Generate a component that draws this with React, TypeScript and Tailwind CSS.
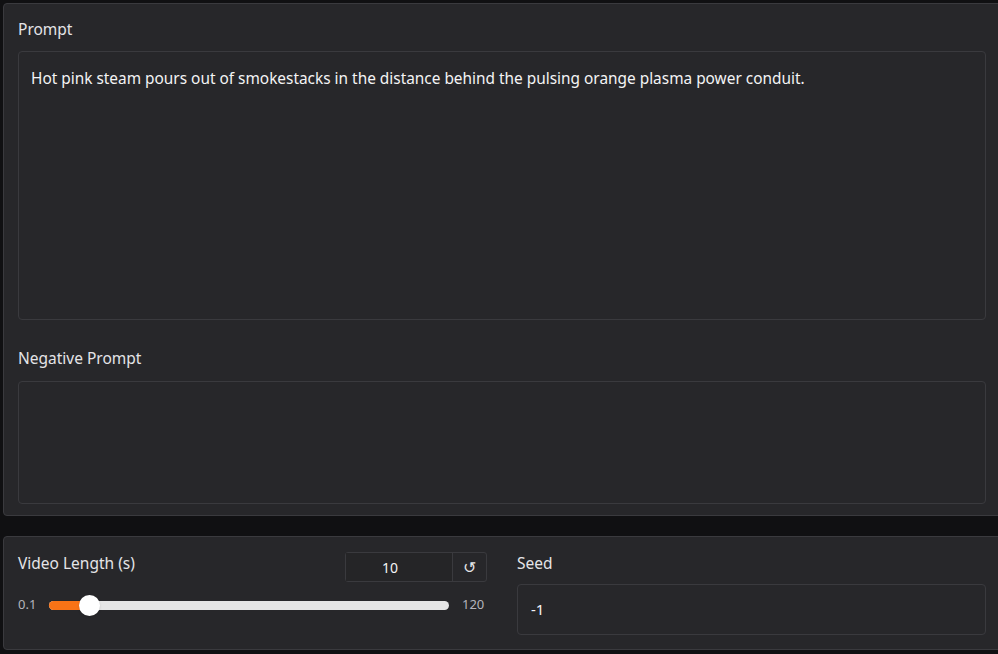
import React from "react";

export default function App() {
  const font = { fontFamily: '"Noto Sans", "Open Sans", sans-serif' };
  return (
    <div
      className="w-[998px] h-[654px] overflow-hidden bg-[#101012] pt-[3px] pl-[3px]"
      style={font}
    >
      <div className="w-[1000px] flex flex-col gap-[20px]">
        {/* Panel 1 */}
        <div className="bg-[#27272a] border border-[#3a3a3e] rounded-[4px] pt-[14px] pb-[11px] px-[14px] flex flex-col">
          <div className="text-[15.5px] leading-[22px] text-[#e4e4e7] mb-[11px]">Prompt</div>
          <div className="w-[968px] h-[269px] border border-[#3a3a3e] rounded-[4px] bg-[#27272a] px-[12px] pt-[16px] text-[15.4px] leading-[22px] text-[#f4f4f5]">
            Hot pink steam pours out of smokestacks in the distance behind the pulsing orange plasma power conduit.
          </div>
          <div className="text-[15.5px] leading-[22px] text-[#e4e4e7] mt-[27px] mb-[12px]">Negative Prompt</div>
          <div className="w-[968px] h-[123px] border border-[#3a3a3e] rounded-[4px] bg-[#27272a]"></div>
        </div>

        {/* Panel 2 */}
        <div className="bg-[#27272a] border border-[#3a3a3e] rounded-[4px] h-[114px] px-[14px] pt-[15px] flex gap-[30px]">
          <div className="w-[469px] flex flex-col">
            <div className="flex items-start justify-between">
              <div className="text-[15.5px] leading-[22px] text-[#e4e4e7]">Video Length (s)</div>
              <div className="flex h-[30px] border border-[#3a3a3e] rounded-[3px]">
                <div className="w-[106px] pr-[18px] flex items-center justify-center text-[14px] text-[#f4f4f5] bg-[#252527]">10</div>
                <div className="w-[34px] flex items-center justify-center border-l border-[#3a3a3e] text-[#e4e4e7] text-[16px] leading-none">
                  ↺
                </div>
              </div>
            </div>
            <div className="flex items-center mt-[11px] h-[24px]">
              <div className="w-[31px] text-[13px] text-[#b4b4bb]">0.1</div>
              <div className="relative w-[400px] h-[9px] rounded-full bg-[#e5e5e5]">
                <div className="absolute left-0 top-0 h-[9px] w-[42px] rounded-full bg-[#f97316]"></div>
                <div className="absolute left-[30px] top-[-6px] w-[21px] h-[21px] rounded-full bg-white shadow"></div>
              </div>
              <div className="ml-[13px] text-[13px] text-[#b4b4bb]">120</div>
            </div>
          </div>
          <div className="w-[469px] flex flex-col">
            <div className="text-[15.5px] leading-[22px] text-[#e4e4e7]">Seed</div>
            <div className="mt-[10px] h-[51px] border border-[#3a3a3e] rounded-[4px] px-[13px] flex items-center text-[15px] text-[#f4f4f5]">-1</div>
          </div>
        </div>
      </div>
    </div>
  );
}
